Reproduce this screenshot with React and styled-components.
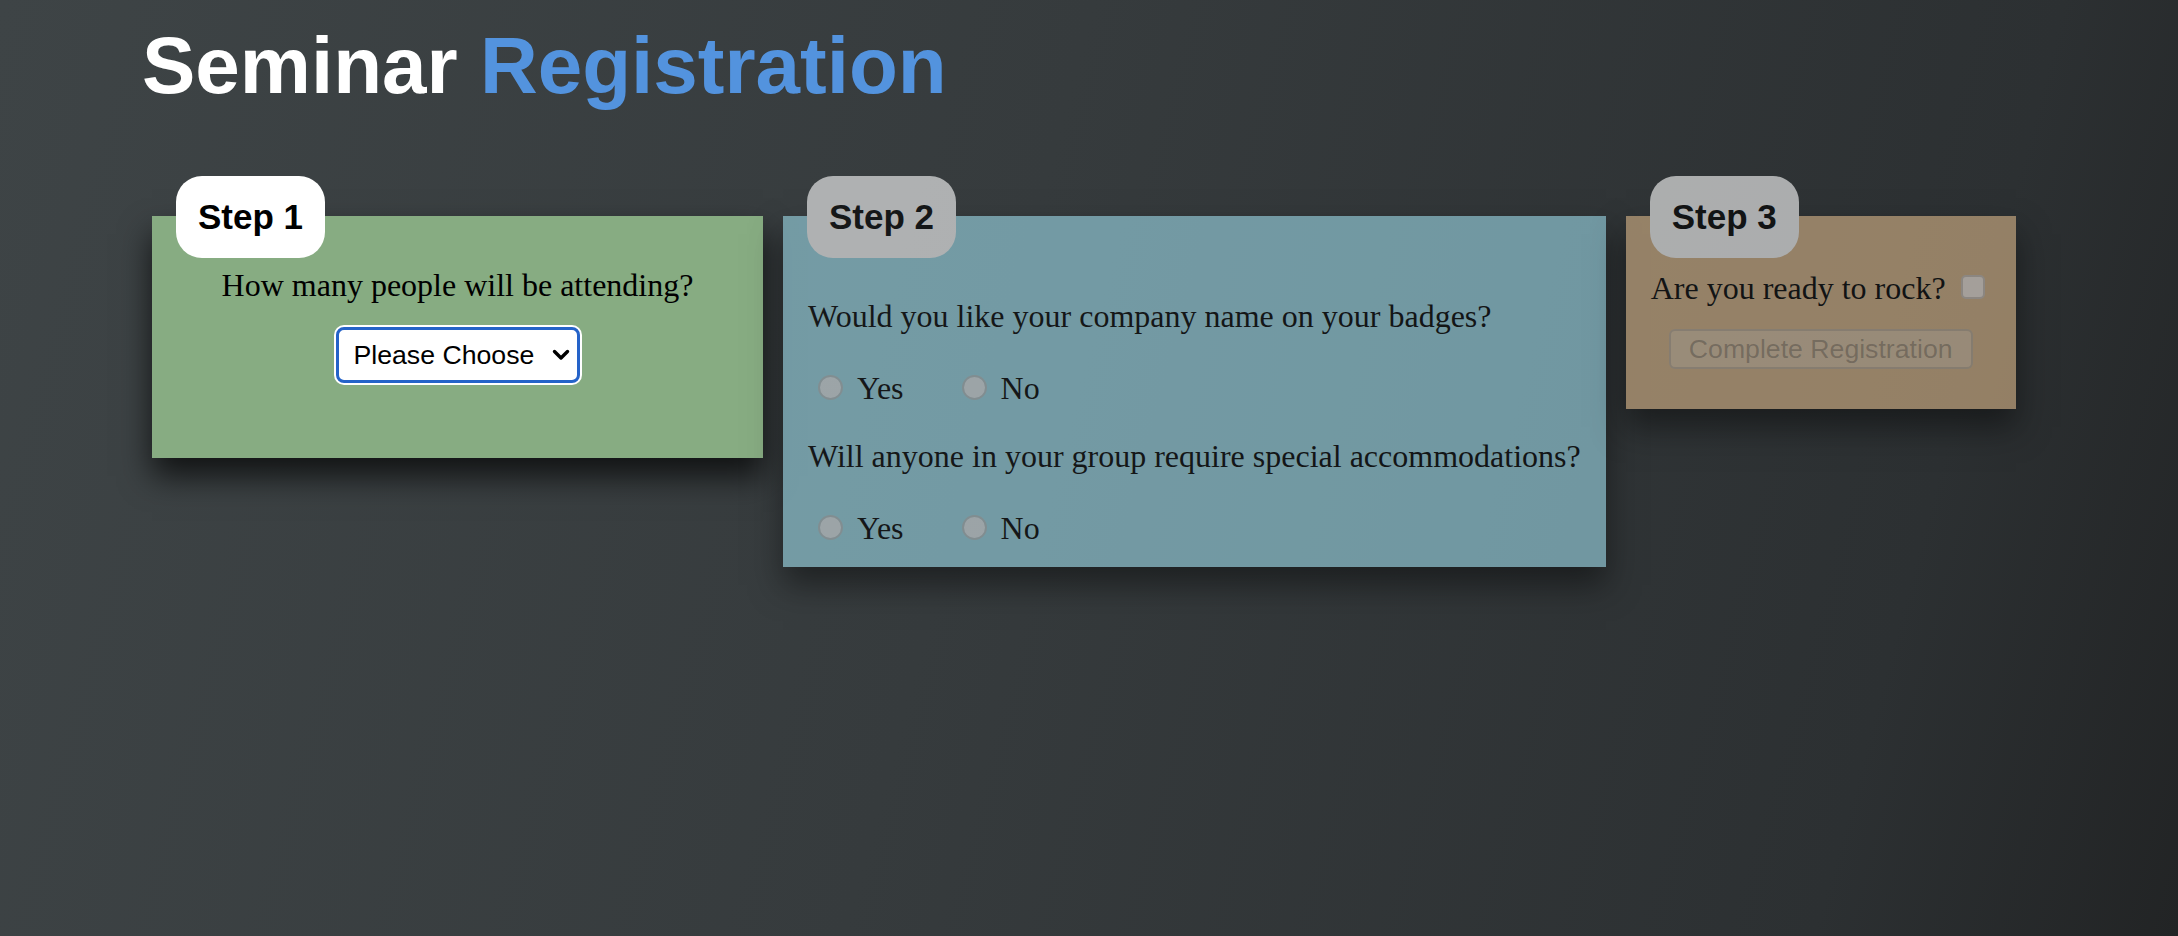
import React from 'react';
import styled, { createGlobalStyle } from 'styled-components';

const GlobalStyle = createGlobalStyle`
  html, body {
    margin: 0;
    padding: 0;
  }
  body {
    font-family: "Liberation Serif", "Times New Roman", serif;
    background: #2c3032;
  }
`;

const Page = styled.div`
  min-height: 100vh;
  box-sizing: border-box;
  padding: 26px 0 0 142px;
  background: linear-gradient(
    105deg,
    #3e4446 0%,
    #363b3d 45%,
    #2c3032 85%,
    #222425 100%
  );
`;

const Title = styled.h1`
  margin: 0;
  font-family: "Liberation Sans", Arial, sans-serif;
  font-size: 80px;
  line-height: 80px;
  font-weight: 700;
  color: #ffffff;
`;

const Accent = styled.span`
  color: #5393de;
`;

const Steps = styled.div`
  display: flex;
  align-items: flex-start;
  margin-top: 110px;
`;

const StepCard = styled.section`
  position: relative;
  flex: none;
  box-sizing: border-box;
  width: ${props => (props.$width ? `${props.$width}px` : 'auto')};
  margin: 0 10px;
  padding: ${props => props.$pad};
  background: ${props => props.$bg};
  opacity: ${props => (props.$active ? 1 : 0.6)};
  box-shadow: 0 18px 30px rgba(0, 0, 0, 0.7);
  text-align: ${props => props.$align || 'left'};
`;

const Badge = styled.div`
  position: absolute;
  top: -40px;
  left: 24px;
  height: 82px;
  padding: 0 22px;
  border-radius: 26px;
  background: #ffffff;
  color: #000000;
  font-family: "Liberation Sans", Arial, sans-serif;
  font-size: 35px;
  font-weight: 700;
  line-height: 82px;
  white-space: nowrap;
`;

const Question = styled.p`
  margin: ${props => props.$gap || 0}px 0 0;
  font-size: 32px;
  line-height: 36px;
  color: #000000;
  white-space: nowrap;
`;

const SelectWrap = styled.div`
  position: relative;
  display: inline-block;
  margin-top: 24px;
  vertical-align: top;
`;

const Select = styled.select`
  appearance: none;
  display: block;
  box-sizing: border-box;
  width: 244px;
  height: 56px;
  padding: 0 40px 0 15px;
  border: 3px solid #2563c9;
  border-radius: 8px;
  box-shadow: 0 0 0 2px #ffffff;
  background: #ffffff;
  color: #000000;
  font-family: "Liberation Sans", Arial, sans-serif;
  font-size: 26.67px;
  outline: none;
`;

const Chevron = styled.svg`
  position: absolute;
  right: 10px;
  top: 22px;
  pointer-events: none;
`;

const RadioRow = styled.div`
  display: flex;
  gap: 48px;
  margin-top: 36px;
  height: 36px;
`;

const Option = styled.label`
  display: flex;
  align-items: flex-start;
  font-size: 32px;
  line-height: 36px;
  color: #000000;
`;

const Radio = styled.input.attrs({ type: 'radio' })`
  appearance: none;
  box-sizing: border-box;
  width: 25px;
  height: 25px;
  margin: 5px 14px 0 10px;
  border: 2px solid #b3c4c8;
  border-radius: 50%;
  background: #e0eaee;
`;

const ReadyLine = styled.div`
  display: flex;
  align-items: flex-start;
  text-align: left;
`;

const Check = styled.input.attrs({ type: 'checkbox' })`
  appearance: none;
  box-sizing: border-box;
  width: 24px;
  height: 24px;
  margin: 5px 6px 0 15px;
  border: 2px solid #cbc0b6;
  border-radius: 5px;
  background: #f5e9df;
`;

const CompleteButton = styled.button`
  box-sizing: border-box;
  height: 40px;
  margin-top: 23px;
  padding: 0 18px;
  border: 2px solid rgba(118, 118, 118, 0.3);
  border-radius: 6px;
  background: rgba(239, 239, 239, 0.3);
  color: rgba(16, 16, 16, 0.3);
  font-family: "Liberation Sans", Arial, sans-serif;
  font-size: 26.67px;
  line-height: 36px;
`;

const yesNo = ['Yes', 'No'];

export default function App() {
  return (
    <>
      <GlobalStyle />
      <Page>
        <Title>
          Seminar <Accent>Registration</Accent>
        </Title>

        <Steps>
          <StepCard $active $bg="#87ac82" $width={611} $pad="51px 25px 75px" $align="center">
            <Badge>Step 1</Badge>
            <Question>How many people will be attending?</Question>
            <SelectWrap>
              <Select defaultValue="">
                <option value="">Please Choose</option>
                <option value="1">1</option>
                <option value="2">2</option>
                <option value="3">3</option>
                <option value="4">4</option>
              </Select>
              <Chevron width="18" height="12" viewBox="0 0 18 12">
                <polyline
                  points="2.5,2.5 9,9 15.5,2.5"
                  fill="none"
                  stroke="#000"
                  strokeWidth="3.4"
                  strokeLinecap="round"
                  strokeLinejoin="round"
                />
              </Chevron>
            </SelectWrap>
          </StepCard>

          <StepCard $bg="#9ddae9" $pad="82px 25px 21px">
            <Badge>Step 2</Badge>
            <Question>Would you like your company name on your badges?</Question>
            <RadioRow>
              {yesNo.map(v => (
                <Option key={v}>
                  <Radio name="company" value={v} disabled />
                  {v}
                </Option>
              ))}
            </RadioRow>
            <Question $gap={32}>Will anyone in your group require special accommodations?</Question>
            <RadioRow>
              {yesNo.map(v => (
                <Option key={v}>
                  <Radio name="special" value={v} disabled />
                  {v}
                </Option>
              ))}
            </RadioRow>
          </StepCard>

          <StepCard $bg="#dab689" $pad="54px 25px 40px" $align="center">
            <Badge>Step 3</Badge>
            <ReadyLine>
              <Question>Are you ready to rock?</Question>
              <Check disabled />
            </ReadyLine>
            <CompleteButton disabled>Complete Registration</CompleteButton>
          </StepCard>
        </Steps>
      </Page>
    </>
  );
}
